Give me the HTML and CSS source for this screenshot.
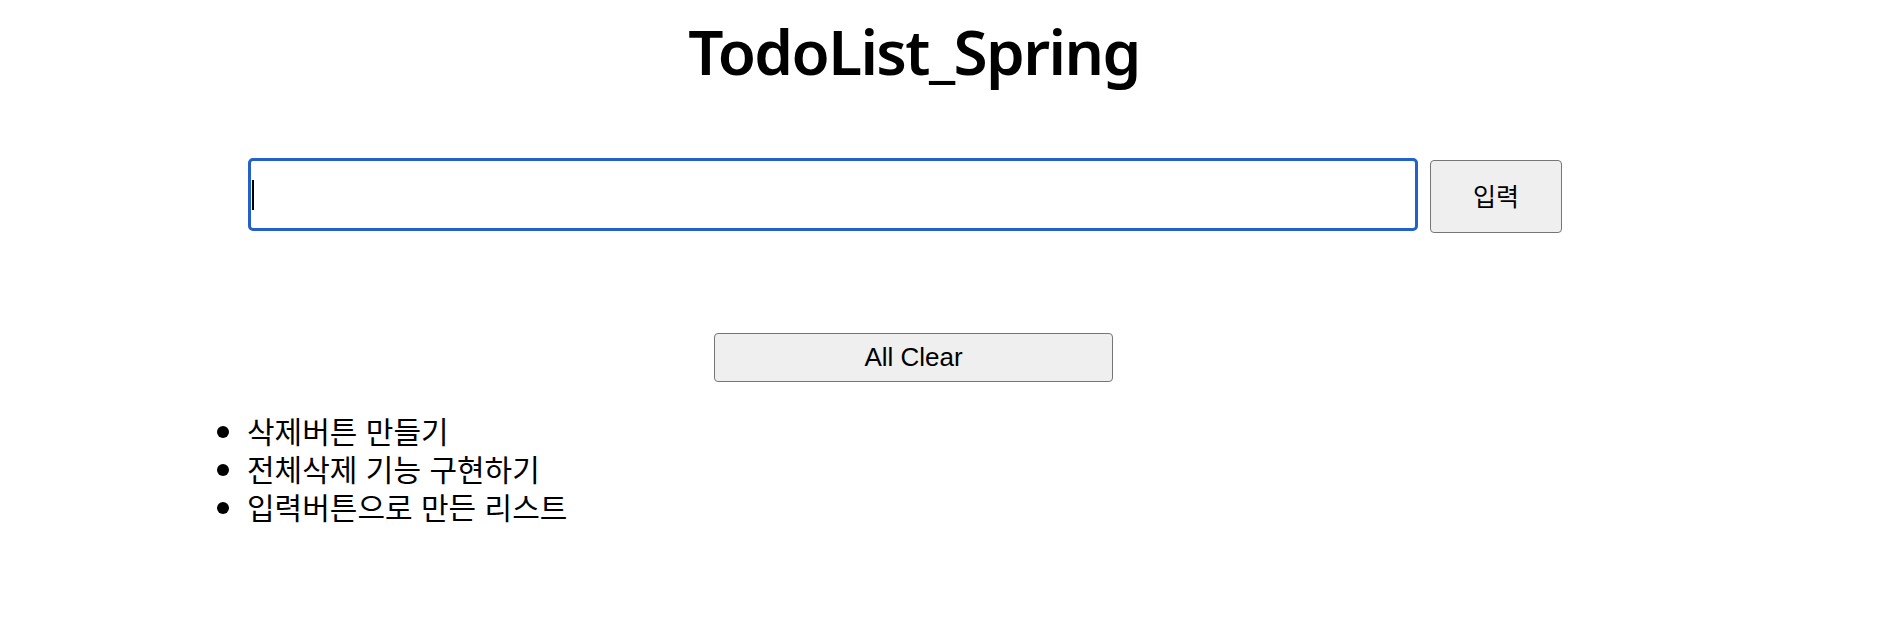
FILE: index.html
```html
<!DOCTYPE html>
<html lang="ko">
<head>
<meta charset="utf-8">
<title>TodoList_Spring</title>
<link rel="stylesheet" href="styles.css">
</head>
<body>
<h1 class="title">TodoList_Spring</h1>
<form class="input-row">
  <div class="field">
    <input class="todo-input" type="text">
    <span class="caret"></span>
  </div>
  <button type="button" class="btn btn-add">입력</button>
</form>
<div class="clear-row">
  <button type="button" class="btn btn-clear">All Clear</button>
</div>
<ul class="todo-list">
  <li>삭제버튼 만들기</li>
  <li>전체삭제 기능 구현하기</li>
  <li>입력버튼으로 만든 리스트</li>
</ul>
</body>
</html>
```
FILE: styles.css
```css
html, body {
  margin: 0;
  padding: 0;
  background: #ffffff;
  color: #000000;
}
body {
  font-family: "Noto Sans CJK KR", "Noto Sans", sans-serif;
  width: 1900px;
}
.title {
  margin: 0;
  padding: 11px 72px 0 0;
  text-align: center;
  font-family: "Noto Sans", "Noto Sans CJK KR", sans-serif;
  font-weight: 600;
  font-size: 62px;
  line-height: 80px;
  letter-spacing: -1.6px;
  height: 80px;
}
.input-row {
  display: flex;
  justify-content: center;
  align-items: flex-start;
  gap: 12px;
  margin: 67px 0 0 0;
  padding-right: 90px;
}
.field {
  position: relative;
  display: flex;
}
.todo-input {
  box-sizing: border-box;
  width: 1170px;
  height: 73px;
  border: 3px solid #2361c9;
  border-radius: 5px;
  outline: none;
  padding: 0 4px;
  font-size: 28px;
  background: #fff;
}
.caret {
  position: absolute;
  left: 4px;
  top: 22px;
  width: 2px;
  height: 30px;
  background: #000;
}
.btn {
  box-sizing: border-box;
  background: #efefef;
  border: 1.5px solid #767676;
  border-radius: 4px;
  color: #000;
  padding: 0;
}
.btn-add {
  width: 132px;
  height: 73px;
  margin-top: 2px;
  padding-bottom: 4px;
  font-family: "Noto Sans CJK KR", sans-serif;
  font-size: 25px;
}
.clear-row {
  display: flex;
  justify-content: center;
  margin-top: 100px;
  padding-right: 73px;
}
.btn-clear {
  width: 399px;
  height: 49px;
  font-family: "Liberation Sans", Arial, sans-serif;
  font-size: 26px;
}
.todo-list {
  margin: 29px 0 0 0;
  padding: 0 0 0 247px;
  font-size: 30px;
  line-height: 38px;
}
.todo-list li {
  padding-left: 0;
}
```
